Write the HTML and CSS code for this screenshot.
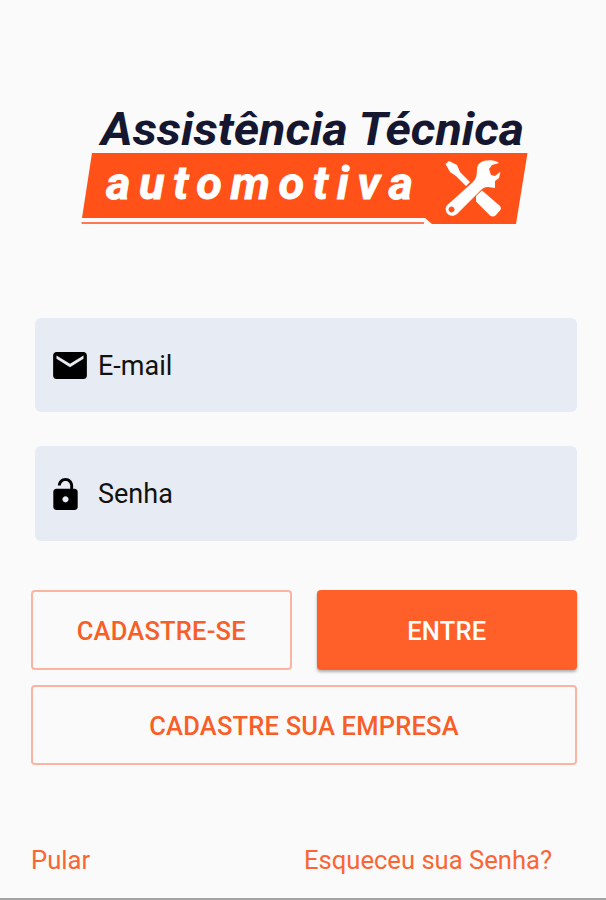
FILE: index.html
```html
<!DOCTYPE html>
<html lang="pt-BR">
<head>
    <meta charset="UTF-8">
    <meta name="viewport" content="width=device-width, initial-scale=1.0">
    <title>Assistência Técnica Automotiva</title>
    <link rel="stylesheet" href="styles.css">
</head>
<body>
    <form class="login">
        <svg class="logo" viewBox="80 95 450 132">
            <text class="logo-title" x="101" y="145" textLength="423" lengthAdjust="spacingAndGlyphs">Assistência Técnica</text>
            <path class="logo-band" d="M92 153H527.500L516 224H432L425 218H82Z"/>
            <path class="logo-line" d="M81.500 223H424"/>
            <text class="logo-subtitle" x="106" y="199" textLength="307">automotiva</text>
            <!-- chave de fenda -->
            <path class="logo-tool" d="M445.500 164L449 161L457 165L460 172L470 182L466 186L456 176L450 172ZM476 196L482 190.500L499.500 205.500Q502 208 500 210.500L495.500 215.500Q493 217.500 490 215.500L476 201.500Z"/>
            <!-- chave inglesa -->
            <path class="logo-tool" fill-rule="evenodd" d="M477 170C477 163 482 160.500 488 160.500C493 160 496 161 499 163L492 165L489 169L491 175L495 176L500.500 171.500L499 178L495 181L495 188L488 187C484 187 482 189 480 191L457 214C453 217.500 447 215.500 446 211C445 208 446 206 449 203.500L473 182C476 179 477 175 477 170ZM451.500 206.500a3 3 0 1 0 .1 0Z"/>
        </svg>

        <label class="field">
            <svg class="icon icon-mail" viewBox="2 4 20 16">
                <path d="M20 4H4c-1.100 0-1.990.9-1.990 2L2 18c0 1.100.9 2 2 2h16c1.100 0 2-.9 2-2V6c0-1.100-.9-2-2-2zm0 4l-8 5-8-5V6l8 5 8-5v2z"/>
            </svg>
            <input type="email" placeholder="E-mail">
        </label>
        <label class="field">
            <svg class="icon icon-lock" viewBox="4 1 16 21">
                <path fill-rule="evenodd" d="M12 17c1.100 0 2-.9 2-2s-.9-2-2-2-2 .9-2 2 .9 2 2 2zm6-9h-1V6c0-2.760-2.240-5-5-5S7 3.240 7 6h1.900c0-1.710 1.390-3.100 3.100-3.100s3.100 1.390 3.100 3.100v2H6c-1.100 0-2 .9-2 2v10c0 1.100.9 2 2 2h12c1.100 0 2-.9 2-2V10c0-1.100-.9-2-2-2z"/>
            </svg>
            <input type="password" placeholder="Senha">
        </label>

        <div class="buttons">
            <button type="button" class="btn">CADASTRE-SE</button>
            <button type="submit" class="btn btn-primary">ENTRE</button>
            <button type="button" class="btn btn-wide">CADASTRE SUA EMPRESA</button>
        </div>

        <div class="links">
            <a href="#">Pular</a>
            <a href="#">Esqueceu sua Senha?</a>
        </div>
    </form>
</body>
</html>
```
FILE: styles.css
```css
* {
    box-sizing: border-box;
}
body {
    margin: 0;
    font-family: Roboto, sans-serif;
    background: #fafafa;
}
.login {
    display: flex;
    flex-direction: column;
    height: 900px;
    padding: 95px 29px 0 31px;
    border-bottom: 2px solid #a3a3a3;
}
.logo {
    width: 450px;
    height: 132px;
    margin: 0 0 91px 49px;
}
.logo-title,
.logo-subtitle {
    font-family: Roboto, sans-serif;
    font-weight: bold;
    font-style: italic;
}
.logo-title {
    font-size: 47px;
    fill: #15162f;
}
.logo-subtitle {
    font-size: 47px;
    fill: #fff;
    stroke: #fff;
    stroke-width: 0.8;
}
.logo-band {
    fill: #ff5118;
}
.logo-line {
    stroke: #fb7a55;
    stroke-width: 2;
}
.logo-tool {
    fill: #fff;
}
.field {
    display: flex;
    align-items: center;
    height: 94px;
    margin: 0 0 34px 4px;
    padding: 0 18px;
    background: #e7ebf3;
    border-radius: 6px;
}
.field + .field {
    height: 95px;
    margin-bottom: 49px;
}
.icon-mail {
    width: 34px;
    height: 27px;
}
.icon-lock {
    width: 25px;
    height: 32px;
    margin-right: 9px;
}
.field input {
    flex: 1;
    min-width: 0;
    padding: 1px 0 0;
    margin-left: 11px;
    border: none;
    outline: none;
    background: none;
    font: 27px Roboto, sans-serif;
}
.field input::placeholder {
    color: #111;
}
.buttons {
    display: grid;
    grid-template-columns: 1fr 1fr;
    gap: 15px 25px;
}
.btn {
    height: 80px;
    padding: 2px 0 0;
    border: 2px solid #fbb3a2;
    border-radius: 4px;
    background: none;
    color: #f85e27;
    font: 500 25.5px Roboto, sans-serif;
    letter-spacing: 0.2px;
}
.btn-primary {
    border: none;
    background: #ff602a;
    color: #fff;
    box-shadow: 0 2px 3px rgba(0, 0, 0, 0.3);
}
.btn-wide {
    grid-column: span 2;
}
.links {
    display: flex;
    justify-content: space-between;
    margin-top: 80px;
    padding-right: 25px;
}
.links a {
    color: #fb6535;
    font-size: 25.6px;
    text-decoration: none;
}
```
